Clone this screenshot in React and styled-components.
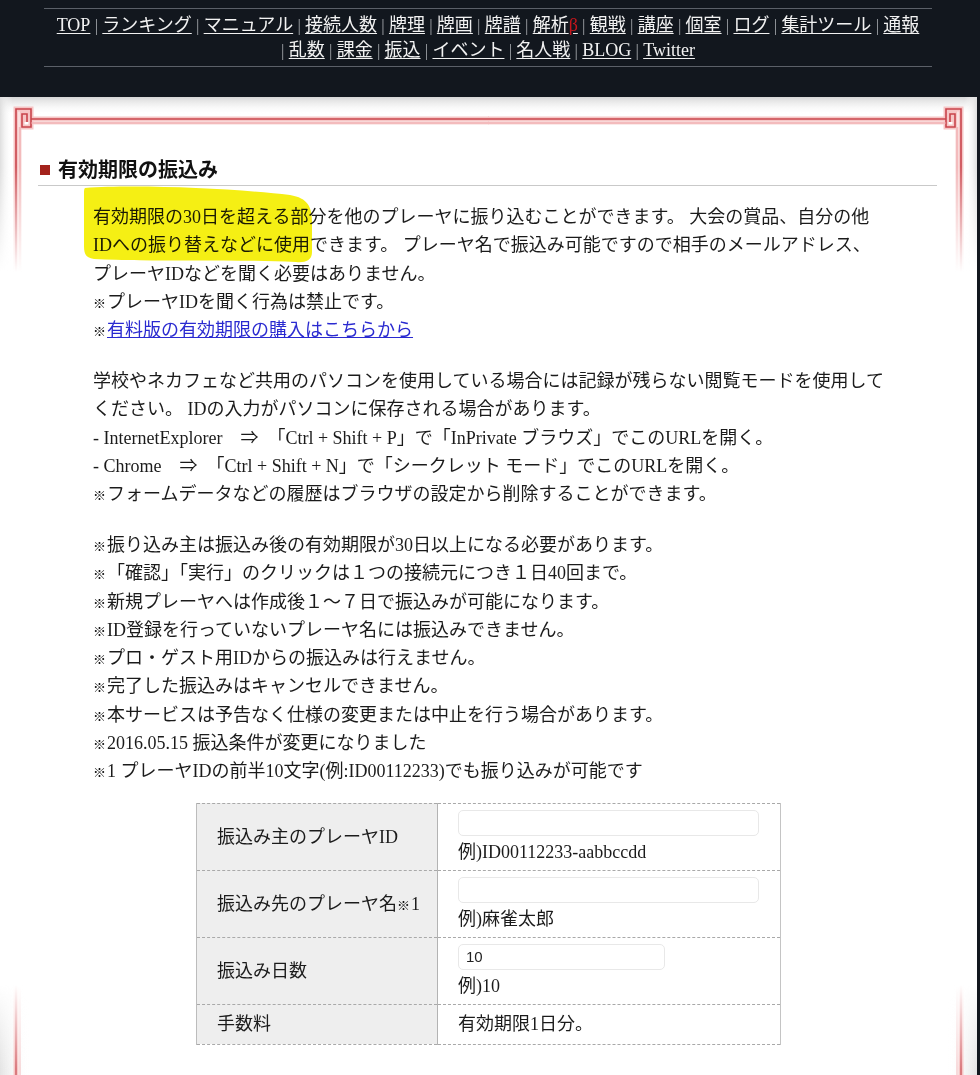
import React from 'react'
import styled, { createGlobalStyle } from 'styled-components'

/*
* Transfer page: dark navigation header, framed white panel with the notes and the form table.
*/

const serif = `"Liberation Serif", "Noto Sans CJK JP", serif`

const NAV_FIRST = ['TOP', 'ランキング', 'マニュアル', '接続人数', '牌理', '牌画', '牌譜', '解析β', '観戦', '講座', '個室', 'ログ', '集計ツール', '通報']
const NAV_SECOND = ['乱数', '課金', '振込', 'イベント', '名人戦', 'BLOG', 'Twitter']

const NOTES = [
    '振り込み主は振込み後の有効期限が30日以上になる必要があります。',
    '「確認」「実行」のクリックは１つの接続元につき１日40回まで。',
    '新規プレーヤへは作成後１～７日で振込みが可能になります。',
    'ID登録を行っていないプレーヤ名には振込みできません。',
    'プロ・ゲスト用IDからの振込みは行えません。',
    '完了した振込みはキャンセルできません。',
    '本サービスは予告なく仕様の変更または中止を行う場合があります。',
    '2016.05.15 振込条件が変更になりました',
    '1 プレーヤIDの前半10文字(例:ID00112233)でも振り込みが可能です',
]

const navItem = (label) => {
    if (label === '解析β') {
        return <NavLink href="#">解析<Beta>β</Beta></NavLink>
    }
    return <NavLink href="#">{label}</NavLink>
}

const navLine = (items, lead) =>
    items.map((label, i) => (
        <React.Fragment key={label}>
            {(i > 0 || lead) && <Sep> | </Sep>}
            {navItem(label)}
        </React.Fragment>
    ))

// the red frame with the fret corners, drawn once and mirrored
const FrameTop = () => (
    <TopDecor width="977" height="175" viewBox="0 0 977 175">
        <defs>
            <linearGradient id="topShade" x1="0" y1="0" x2="0" y2="1">
                <stop offset="0" stopColor="#d6d6d6" />
                <stop offset="1" stopColor="#ffffff" stopOpacity="0" />
            </linearGradient>
            <linearGradient id="leftShade" x1="0" y1="0" x2="1" y2="0">
                <stop offset="0" stopColor="#dedede" />
                <stop offset="1" stopColor="#ffffff" stopOpacity="0" />
            </linearGradient>
            <linearGradient id="rightShade" x1="1" y1="0" x2="0" y2="0">
                <stop offset="0" stopColor="#dedede" />
                <stop offset="1" stopColor="#ffffff" stopOpacity="0" />
            </linearGradient>
        </defs>
        <rect x="0" y="0" width="977" height="18" fill="url(#topShade)" />
        <rect x="0" y="0" width="12" height="175" fill="url(#leftShade)" />
        <rect x="965" y="0" width="12" height="175" fill="url(#rightShade)" />
        {[false, true].map((mirror) => (
            <g key={String(mirror)} transform={mirror ? 'translate(977 0) scale(-1 1)' : undefined}>
                <path d="M16,175 V12 H31 V30 H22 V17 H27 V25" fill="none" stroke="#f6c6c6" strokeWidth="5" />
                <path d="M20,175 V30 M31,26 H489" fill="none" stroke="#f8d3d3" strokeWidth="3" />
                <path d="M31,22 H489" fill="none" stroke="#f6c6c6" strokeWidth="5" />
                <path d="M16,175 V12 H31 V30 H22 V17 H27 V25" fill="none" stroke="#c9444b" strokeWidth="1.6" />
                <path d="M31,22 H489" fill="none" stroke="#c9444b" strokeWidth="1.6" />
                <path d="M20,175 V30 M31,26 H489" fill="none" stroke="#eea3a6" strokeWidth="1" />
            </g>
        ))}
    </TopDecor>
)

const FrameBottom = () => (
    <BottomDecor width="977" height="120" viewBox="0 0 977 120">
        <defs>
            <linearGradient id="sideShadeB" x1="0" y1="0" x2="1" y2="0">
                <stop offset="0" stopColor="#e4e4e4" />
                <stop offset="1" stopColor="#ffffff" stopOpacity="0" />
            </linearGradient>
        </defs>
        {[false, true].map((mirror) => (
            <g key={String(mirror)} transform={mirror ? 'translate(977 0) scale(-1 1)' : undefined}>
                <rect x="0" y="0" width="30" height="120" fill="url(#sideShadeB)" />
                <path d="M16,0 V120" stroke="#f6c6c6" strokeWidth="5" />
                <path d="M16,0 V120" stroke="#cf5a60" strokeWidth="1.4" />
                <path d="M20,0 V120" stroke="#f2b7b9" strokeWidth="1" />
            </g>
        ))}
    </BottomDecor>
)

const App = () => {
    return (
        <Page>
            <GlobalStyle />
            <Header>
                <NavBar>
                    {navLine(NAV_FIRST, false)}
                    <br />
                    {navLine(NAV_SECOND, true)}
                </NavBar>
            </Header>

            <Panel>
                <FrameTop />
                <Heading>有効期限の振込み</Heading>

                <Content>
                    <Para>
                        <Marker viewBox="0 0 240 90" width="240" height="90">
                            <path d="M5,6 C60,2 160,7 210,13 C228,16 232,25 232,40 L232,70 C232,78 226,81 216,80 C150,77 70,80 14,77 C6,76 4,72 4,64 L4,14 C4,9 4,7 5,6 Z" fill="#f5ef14" />
                        </Marker>
                        有効期限の30日を超える部分を他のプレーヤに振り込むことができます。 大会の賞品、自分の他<br />
                        IDへの振り替えなどに使用できます。 プレーヤ名で振込み可能ですので相手のメールアドレス、<br />
                        プレーヤIDなどを聞く必要はありません。<br />
                        <Kome>※</Kome>プレーヤIDを聞く行為は禁止です。<br />
                        <Kome>※</Kome><TextLink href="#">有料版の有効期限の購入はこちらから</TextLink>
                    </Para>

                    <Para>
                        学校やネカフェなど共用のパソコンを使用している場合には記録が残らない閲覧モードを使用して<br />
                        ください。 IDの入力がパソコンに保存される場合があります。<br />
                        - InternetExplorer　⇒　「Ctrl + Shift + P」で「InPrivate ブラウズ」でこのURLを開く。<br />
                        - Chrome　⇒　「Ctrl + Shift + N」で「シークレット モード」でこのURLを開く。<br />
                        <Kome>※</Kome>フォームデータなどの履歴はブラウザの設定から削除することができます。
                    </Para>

                    <Para>
                        {NOTES.map((note, i) => (
                            <React.Fragment key={note}>
                                <Kome>※</Kome>{note}
                                {i < NOTES.length - 1 && <br />}
                            </React.Fragment>
                        ))}
                    </Para>

                    <FormTable>
                        <tbody>
                            <tr>
                                <LabelCell>振込み主のプレーヤID</LabelCell>
                                <ValueCell>
                                    <TextInput type="text" $wide />
                                    <Example>例)ID00112233-aabbccdd</Example>
                                </ValueCell>
                            </tr>
                            <tr>
                                <LabelCell>振込み先のプレーヤ名<Kome>※</Kome>1</LabelCell>
                                <ValueCell>
                                    <TextInput type="text" $wide />
                                    <Example>例)麻雀太郎</Example>
                                </ValueCell>
                            </tr>
                            <tr>
                                <LabelCell>振込み日数</LabelCell>
                                <ValueCell>
                                    <TextInput type="text" defaultValue="10" />
                                    <Example>例)10</Example>
                                </ValueCell>
                            </tr>
                            <tr>
                                <LabelCell $short>手数料</LabelCell>
                                <ValueCell $short>有効期限1日分。</ValueCell>
                            </tr>
                        </tbody>
                    </FormTable>
                </Content>

                <FrameBottom />
            </Panel>
        </Page>
    )
}

const GlobalStyle = createGlobalStyle`
    body {
        margin: 0;
        background: #12171e;
        font-family: ${serif};
    }
`

// whole page
const Page = styled.div`
    width: 980px;
    min-height: 1075px;
    background: #12171e;
`

// dark bar holding the navigation
const Header = styled.header`
    height: 97px;
    padding-top: 8px;
    box-sizing: border-box;
`

const NavBar = styled.nav`
    margin: 0 48px 0 44px;
    border-top: 1px solid #5b6068;
    border-bottom: 1px solid #5b6068;
    padding: 4px 0 3px;
    text-align: center;
    font-size: 18px;
    line-height: 25px;
    color: #9a9da2;
    white-space: nowrap;
`

const NavLink = styled.a`
    color: #f2f2f2;
    text-decoration: underline;
    text-underline-offset: 2px;
`

const Beta = styled.span`
    color: #c4161c;
`

const Sep = styled.span`
    color: #a0a3a8;
    font-size: 17px;
`

// white panel with the red frame
const Panel = styled.main`
    position: relative;
    width: 977px;
    background: #ffffff;
    padding: 59px 0 60px;
    box-sizing: border-box;
    color: #1b1b1b;
`

const TopDecor = styled.svg`
    position: absolute;
    top: 0;
    left: 0;
    pointer-events: none;
    -webkit-mask-image: linear-gradient(to bottom, #000 40%, transparent 100%);
    mask-image: linear-gradient(to bottom, #000 40%, transparent 100%);
`

const BottomDecor = styled.svg`
    position: absolute;
    bottom: 0;
    left: 0;
    pointer-events: none;
    -webkit-mask-image: linear-gradient(to bottom, transparent 0%, #000 70%);
    mask-image: linear-gradient(to bottom, transparent 0%, #000 70%);
`

const Heading = styled.h2`
    display: flex;
    align-items: center;
    margin: 0 40px 0 38px;
    padding: 0 0 1px 2px;
    border-bottom: 1px solid #c9c9c9;
    font-size: 20px;
    line-height: 28px;
    font-weight: bold;
    color: #111;

    &::before {
        content: '';
        width: 10px;
        height: 10px;
        margin-right: 8px;
        background: #a3221c;
    }
`

const Content = styled.div`
    padding: 17px 93px 0;
`

const Para = styled.p`
    position: relative;
    margin: 0 0 22.5px;
    font-size: 18px;
    line-height: 28.3px;
    white-space: nowrap;

    &:last-of-type {
        margin-bottom: 0;
    }
`

// yellow highlighter stroke laid over the first lines
const Marker = styled.svg`
    position: absolute;
    left: -13px;
    top: -21px;
    mix-blend-mode: multiply;
    pointer-events: none;
`

const Kome = styled.span`
    font-size: 13px;
    line-height: 1;
    font-weight: bold;
    margin-right: 1px;
    color: #111;
`

const TextLink = styled.a`
    color: #2a2ad0;
    text-decoration: underline;
`

const FormTable = styled.table`
    width: 585px;
    margin: 17px auto 0;
    border-collapse: collapse;
    font-size: 18px;
`

const LabelCell = styled.td`
    width: 220px;
    height: ${(p) => (p.$short ? '39px' : '66px')};
    padding: 0 0 0 20px;
    background: #eeeeee;
    border-top: 1px dashed #a9a9a9;
    border-bottom: 1px dashed #a9a9a9;
    border-left: 1px solid #bcbcbc;
    border-right: 1px solid #b3b3b3;
    vertical-align: middle;
    line-height: 28px;
`

const ValueCell = styled.td`
    padding: ${(p) => (p.$short ? '5px 20px 5px' : '6px 20px 4px')};
    border-top: 1px dashed #a9a9a9;
    border-bottom: 1px dashed #a9a9a9;
    border-right: 1px solid #c4c4c4;
    vertical-align: top;
    line-height: 28px;
`

const TextInput = styled.input`
    display: block;
    box-sizing: border-box;
    width: ${(p) => (p.$wide ? '301px' : '207px')};
    height: 26px;
    margin: 0 0 2px;
    padding: 0 7px;
    border: 1px solid #e8e8e8;
    border-radius: 5px;
    background: #fff;
    font-family: "Liberation Sans", "Noto Sans", sans-serif;
    font-size: 15px;
    color: #222;
    outline: none;
`

const Example = styled.div`
    line-height: 28px;
`

export default App
